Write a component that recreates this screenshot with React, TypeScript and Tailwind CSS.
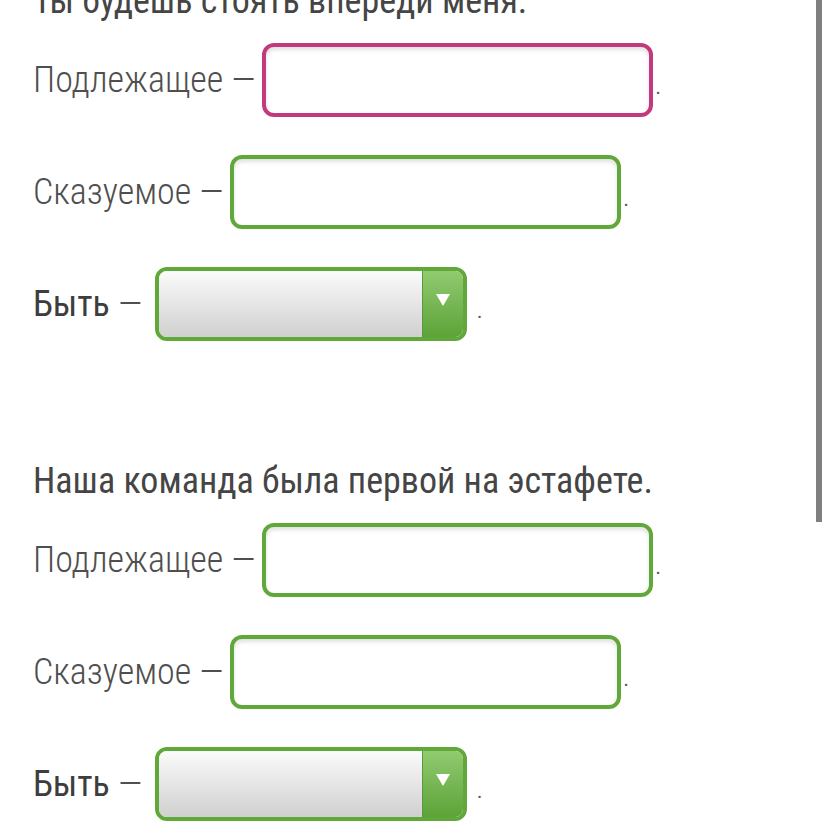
import React from "react";

const font = { fontFamily: "Roboto, 'Liberation Sans', sans-serif" };

function TextBox({ pink }: { pink?: boolean }) {
  return (
    <div
      className={`h-[74px] w-[391px] rounded-[12px] border-[4px] bg-white shadow-[inset_0_3px_4px_rgba(0,0,0,0.12)] ${
        pink ? "border-[#c23a7b]" : "border-[#60a83a]"
      }`}
    />
  );
}

function SelectBox() {
  return (
    <div className="flex h-[74px] w-[312px] overflow-hidden rounded-[12px] border-[4px] border-[#60a83a]">
      <div className="flex-1 bg-gradient-to-b from-[#fbfbfb] to-[#d0d0d0]" />
      <div className="flex w-[41px] items-center justify-center border-l border-[#5a9a36] bg-gradient-to-b from-[#92ca70] to-[#5ba337]">
        <svg width="14" height="12" viewBox="0 0 14 12" className="mb-[8px]">
          <path d="M0 0H14L7 12Z" fill="#ffffff" />
        </svg>
      </div>
    </div>
  );
}

function Row({
  label,
  bold,
  gap,
  dot,
  children,
}: {
  label: string;
  bold?: boolean;
  gap: string;
  dot: string;
  children: React.ReactNode;
}) {
  return (
    <div className="flex h-[74px] items-center">
      <span className="whitespace-nowrap text-[36px] leading-none [font-stretch:condensed]">
        <span className={bold ? "font-normal text-[#3d3d3d]" : "font-light text-[#4f4f4f]"}>{label}</span>
        <span className="font-light text-[#4f4f4f]"> —</span>
      </span>
      <div className={gap}>{children}</div>
      <span className={`${dot} mt-[14px] text-[20px] leading-none text-[#555]`}>.</span>
    </div>
  );
}

function Block({ title, pink }: { title: string; pink?: boolean }) {
  return (
    <div className="flex flex-col">
      <div className="flex h-[40px] items-center whitespace-nowrap text-[36px] leading-none text-[#454545] [font-stretch:condensed]">
        {title}
      </div>
      <div className="mt-[22px] flex flex-col gap-[38px]">
        <Row label="Подлежащее" gap="ml-[7px]" dot="ml-[2px]">
          <TextBox pink={pink} />
        </Row>
        <Row label="Сказуемое" gap="ml-[7px]" dot="ml-[2px]">
          <TextBox />
        </Row>
        <Row label="Быть" bold gap="ml-[13px]" dot="ml-[10px]">
          <SelectBox />
        </Row>
      </div>
    </div>
  );
}

export default function App() {
  return (
    <div className="relative h-[828px] w-[828px] overflow-hidden bg-white" style={font}>
      <div className="ml-[33px] mt-[-19px] flex flex-col gap-[120px]">
        <Block title="Ты будешь стоять впереди меня." pink />
        <Block title="Наша команда была первой на эстафете." />
      </div>
      <div className="absolute right-[6px] top-0 h-[522px] w-[6px] bg-[#7f7f7f]" />
    </div>
  );
}
